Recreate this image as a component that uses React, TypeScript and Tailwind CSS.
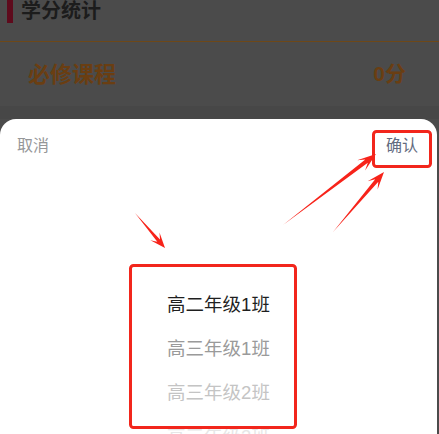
import React from 'react'

type Pt = [number, number]

// tapered annotation arrow, thin tail -> wide head
function arrowPoints(tail: Pt, tip: Pt, headLen: number, headHalf: number, shaft: number) {
  const dx = tip[0] - tail[0]
  const dy = tip[1] - tail[1]
  const len = Math.hypot(dx, dy)
  const ux = dx / len
  const uy = dy / len
  const nx = -uy
  const ny = ux
  const barb = (s: number): Pt => [tip[0] - ux * headLen * 1.1 + nx * headHalf * s, tip[1] - uy * headLen * 1.1 + ny * headHalf * s]
  const notch = (s: number): Pt => [tip[0] - ux * headLen * 0.7 + nx * shaft * s, tip[1] - uy * headLen * 0.7 + ny * shaft * s]
  const pts: Pt[] = [tail, notch(1), barb(1), tip, barb(-1), notch(-1)]
  return pts.map((p) => `${p[0].toFixed(1)},${p[1].toFixed(1)}`).join(' ')
}

const items = [
  { label: '高二年级1班', cls: 'text-[#1f1f1f]' },
  { label: '高三年级1班', cls: 'text-[#9a9a9a]' },
  { label: '高三年级2班', cls: 'text-[#c4c4c4]' },
  { label: '高三年级3班', cls: 'text-[#e6e6e6]' },
]

export default function App() {
  return (
    <div
      className="relative w-[439px] h-[434px] overflow-hidden bg-[#4b4b4b] flex flex-col"
      style={{ fontFamily: '"Liberation Sans", "Noto Sans CJK SC", sans-serif' }}
    >
      {/* dimmed page behind the sheet */}
      <div className="shrink-0 h-[42px] flex items-start border-b border-[#6e4818]">
        <div className="ml-[7px] w-[6px] h-[23px] bg-[#5e0a1c]" />
        <div className="ml-[8px] text-[20px] leading-[22px] font-bold text-[#1c1c1c]">学分统计</div>
      </div>
      <div className="shrink-0 h-[64px] flex items-center justify-between pl-[28px] pr-[33px]">
        <span className="text-[22px] font-bold text-[#6a3e12]">必修课程</span>
        <span className="text-[21px] font-bold text-[#6a3e12]">0分</span>
      </div>
      <div className="shrink-0 h-[13px] bg-[#474747]" />

      {/* bottom sheet picker */}
      <div className="shrink-0 h-[315px] mr-[2px] bg-white rounded-t-[16px] flex flex-col">
        <div className="shrink-0 h-[54px] flex items-center justify-between pl-[17px] pr-[19px] text-[16px]">
          <span className="text-[#969799]">取消</span>
          <span className="text-[#636b80]">确认</span>
        </div>
        <div className="pt-[110px] flex flex-col">
          {items.map((it) => (
            <div key={it.label} className={`shrink-0 h-[44px] flex items-center justify-center text-[18.5px] ${it.cls}`}>
              {it.label}
            </div>
          ))}
        </div>
      </div>

      {/* annotations */}
      <svg className="absolute inset-0 pointer-events-none" width="439" height="434">
        <rect x="373.5" y="131.5" width="57" height="35" rx="3" fill="none" stroke="#f2261c" strokeWidth="3" />
        <rect x="130.5" y="265.5" width="165" height="162" rx="3" fill="none" stroke="#f2261c" strokeWidth="3" />
        <polygon points={arrowPoints([135, 213], [165, 248], 14, 6, 1.8)} fill="#f7231a" />
        <polygon points={arrowPoints([283, 225], [376, 154], 17, 6.5, 2)} fill="#f7231a" />
        <polygon points={arrowPoints([333, 232], [384, 172], 16, 6.5, 2)} fill="#f7231a" />
      </svg>
    </div>
  )
}
